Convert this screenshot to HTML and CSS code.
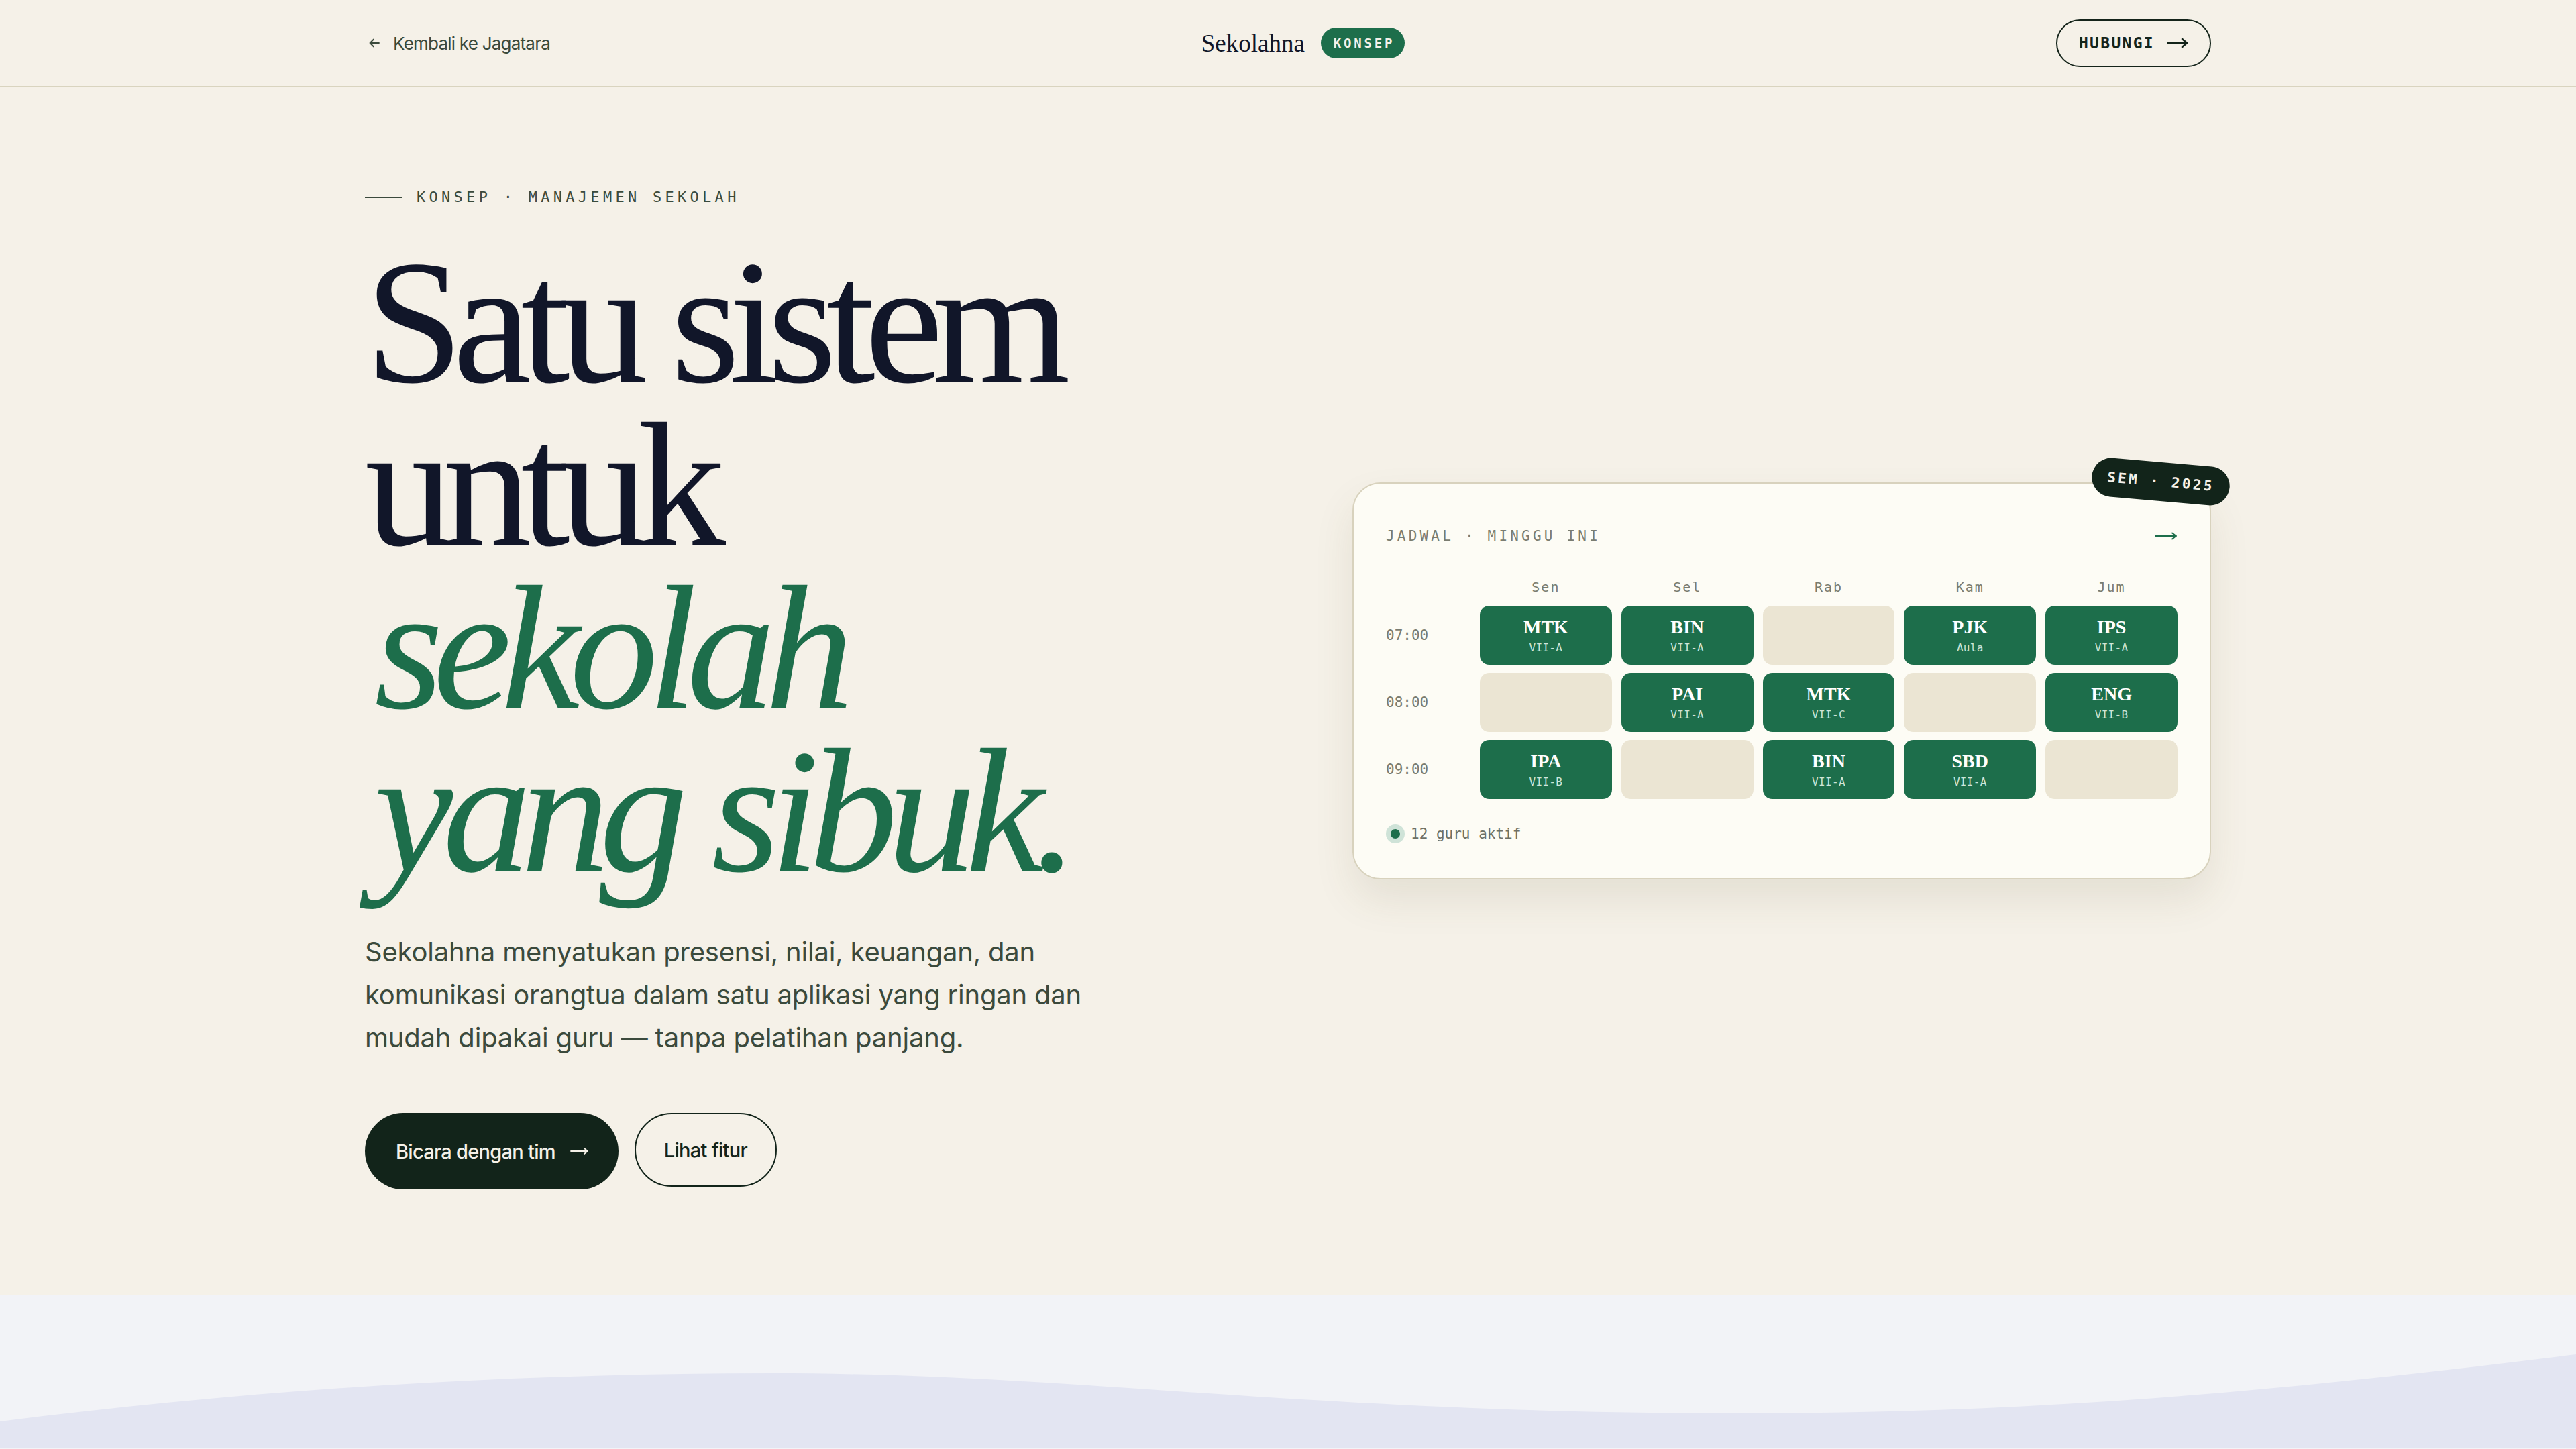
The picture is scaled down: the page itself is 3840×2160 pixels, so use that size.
FILE: index.html
```html
<!DOCTYPE html>
<html lang="id">
<head>
<meta charset="utf-8">
<title>Sekolahna — Konsep</title>
<link rel="stylesheet" href="styles.css">
</head>
<body>
<header class="topbar">
	<div class="wrap topbar-inner">
		<a class="back-link" href="#">
			<svg class="back-icon" viewBox="0 0 20 20" width="20" height="20"><path d="M17 10H3.5M9 4.5L3.5 10 9 15.5" fill="none" stroke="currentColor" stroke-width="1.8" stroke-linecap="round" stroke-linejoin="round"/></svg>
			Kembali ke Jagatara
		</a>
		<div class="brand">
			<span class="brand-name">Sekolahna</span>
			<span class="brand-tag">KONSEP</span>
		</div>
		<a class="contact-btn" href="#">HUBUNGI
			<svg class="arrow" viewBox="0 0 32 16" width="32" height="16"><path d="M1 8H30M23 2L30 8 23 14" fill="none" stroke="currentColor" stroke-width="2.6" stroke-linecap="round" stroke-linejoin="round"/></svg>
		</a>
	</div>
</header>

<section class="hero">
	<div class="wrap hero-inner">
		<div class="hero-copy">
			<div class="eyebrow"><span class="eyebrow-line"></span>KONSEP · MANAJEMEN SEKOLAH</div>
			<h1 class="headline">Satu sistem<br>untuk<br><em>sekolah</em><br><em>yang sibuk.</em></h1>
			<p class="lead">Sekolahna menyatukan presensi, nilai, keuangan, dan komunikasi orangtua dalam satu aplikasi yang ringan dan mudah dipakai guru — tanpa pelatihan panjang.</p>
			<div class="actions">
				<a class="btn btn-dark" href="#">Bicara dengan tim
					<svg class="arrow" viewBox="0 0 28 14" width="28" height="14"><path d="M1 7H26M21 3L26 7 21 11" fill="none" stroke="currentColor" stroke-width="1.8" stroke-linecap="round" stroke-linejoin="round"/></svg>
				</a>
				<a class="btn btn-line" href="#">Lihat fitur</a>
			</div>
		</div>

		<div class="schedule">
			<span class="sem-badge">SEM · 2025</span>
			<div class="schedule-head">
				<span class="schedule-title">JADWAL · MINGGU INI</span>
				<svg class="schedule-arrow" viewBox="0 0 34 14" width="34" height="14"><path d="M1 7H32M26 2.5L32 7 26 11.5" fill="none" stroke="currentColor" stroke-width="2" stroke-linecap="round" stroke-linejoin="round"/></svg>
			</div>
			<div class="grid">
				<span></span>
				<span class="day">Sen</span>
				<span class="day">Sel</span>
				<span class="day">Rab</span>
				<span class="day">Kam</span>
				<span class="day">Jum</span>

				<span class="time">07:00</span>
				<div class="slot"><b>MTK</b><small>VII-A</small></div>
				<div class="slot"><b>BIN</b><small>VII-A</small></div>
				<div class="slot empty"></div>
				<div class="slot"><b>PJK</b><small>Aula</small></div>
				<div class="slot"><b>IPS</b><small>VII-A</small></div>

				<span class="time">08:00</span>
				<div class="slot empty"></div>
				<div class="slot"><b>PAI</b><small>VII-A</small></div>
				<div class="slot"><b>MTK</b><small>VII-C</small></div>
				<div class="slot empty"></div>
				<div class="slot"><b>ENG</b><small>VII-B</small></div>

				<span class="time">09:00</span>
				<div class="slot"><b>IPA</b><small>VII-B</small></div>
				<div class="slot empty"></div>
				<div class="slot"><b>BIN</b><small>VII-A</small></div>
				<div class="slot"><b>SBD</b><small>VII-A</small></div>
				<div class="slot empty"></div>
			</div>
			<div class="schedule-foot"><span class="live-dot"></span>12 guru aktif</div>
		</div>
	</div>
</section>

<section class="next">
	<svg class="wave" viewBox="0 0 3840 228" preserveAspectRatio="none"><path d="M0,188 C380,140 760,116 1151,116 C1600,116 1950,176 2596,176 C3100,176 3500,130 3840,88 L3840,228 L0,228 Z" fill="#e3e5f2"/></svg>
</section>
</body>
</html>
```

FILE: styles.css
```css
* {
	box-sizing: border-box;
}
body {
	margin: 0;
	background-color: #f5f1e8;
	font-family: Inter, "Noto Sans", sans-serif;
	color: #111629;
}
a {
	text-decoration: none;
	color: inherit;
}
.wrap {
	max-width: 2752px;
	margin: 0 auto;
}
.arrow {
	display: block;
}

/* top bar */
.topbar {
	border-bottom: 2px solid #d9d4bf;
}
.topbar-inner {
	height: 128px;
	display: flex;
	align-items: center;
	justify-content: space-between;
}
.back-link {
	display: flex;
	align-items: center;
	gap: 18px;
	font-size: 26px;
	letter-spacing: -0.03em;
	color: #3b4a3c;
	padding-left: 4px;
}
.back-icon {
	display: block;
}
.brand {
	display: flex;
	align-items: center;
	gap: 24px;
}
.brand-name {
	font-family: "Liberation Serif", serif;
	font-size: 37px;
	color: #111629;
}
.brand-tag {
	background-color: #1d6e4b;
	color: #f5f1e8;
	font-family: "DejaVu Sans Mono", monospace;
	font-weight: bold;
	font-size: 19px;
	letter-spacing: 0.2em;
	height: 46px;
	padding: 0 15px 0 19px;
	border-radius: 23px;
	display: flex;
	align-items: center;
}
.contact-btn {
	display: flex;
	align-items: center;
	gap: 18px;
	height: 71px;
	padding: 0 32px 0 32px;
	border: 2px solid #14241a;
	border-radius: 36px;
	font-family: "DejaVu Sans Mono", monospace;
	font-weight: bold;
	font-size: 23px;
	letter-spacing: 0.1em;
	color: #14241a;
}

/* hero */
.hero {
	padding: 151px 0 158px;
}
.hero-inner {
	display: grid;
	grid-template-columns: 1fr 1280px;
	gap: 192px;
	align-items: center;
}
.eyebrow {
	display: flex;
	align-items: center;
	gap: 22px;
	font-family: "DejaVu Sans Mono", monospace;
	font-size: 22px;
	letter-spacing: 0.24em;
	color: #3b4a3c;
}
.eyebrow-line {
	width: 55px;
	height: 2px;
	background-color: #3b4a3c;
}
.headline {
	margin: 53px 0 0;
	font-family: "Liberation Serif", serif;
	font-weight: normal;
	font-size: 264px;
	line-height: 243px;
	letter-spacing: -0.06em;
	color: #111629;
}
.headline em {
	color: #1d6e4b;
	padding-left: 14px;
	letter-spacing: -0.058em;
}
.lead {
	margin: 56px 0 0;
	max-width: 1110px;
	font-size: 40px;
	line-height: 64px;
	letter-spacing: -0.005em;
	color: #3b4a3c;
}
.actions {
	display: flex;
	gap: 24px;
	margin-top: 80px;
}
.btn {
	display: flex;
	align-items: center;
	border-radius: 57px;
	font-size: 29px;
	font-weight: 500;
	letter-spacing: -0.025em;
}
.btn-dark {
	height: 114px;
	padding: 0 44px 0 46px;
	gap: 22px;
	background-color: #12241a;
	color: #f5f1e8;
}
.btn-line {
	height: 110px;
	padding: 0 42px;
	border: 2px solid #12241a;
	color: #12241a;
}

/* schedule card */
.schedule {
	position: relative;
	margin-bottom: 24px;
	background-color: #fdfcf5;
	border: 2px solid #d8d2bd;
	border-radius: 42px;
	padding: 60px 48px 52px;
	box-shadow: 0 30px 60px rgba(90, 80, 40, 0.1);
}
.sem-badge {
	position: absolute;
	top: -32px;
	right: -30px;
	width: 206px;
	height: 58px;
	border-radius: 29px;
	background-color: #12241a;
	color: #f5f1e8;
	font-family: "DejaVu Sans Mono", monospace;
	font-weight: bold;
	font-size: 21px;
	letter-spacing: 0.16em;
	display: flex;
	align-items: center;
	justify-content: center;
	transform: rotate(5deg);
}
.schedule-head {
	display: flex;
	justify-content: space-between;
	align-items: center;
	height: 36px;
}
.schedule-title {
	font-family: "DejaVu Sans Mono", monospace;
	font-size: 21px;
	letter-spacing: 0.2em;
	color: #7a7c70;
}
.schedule-arrow {
	display: block;
	color: #1d6e4b;
}
.grid {
	margin-top: 46px;
	display: grid;
	grid-template-columns: 126px repeat(5, 1fr);
	grid-template-rows: 28px repeat(3, 88px);
	gap: 12px 14px;
}
.day {
	text-align: center;
	font-family: "DejaVu Sans Mono", monospace;
	font-size: 20px;
	letter-spacing: 0.1em;
	color: #7a7c70;
}
.time {
	display: flex;
	align-items: center;
	font-family: "DejaVu Sans Mono", monospace;
	font-size: 21px;
	color: #7a7c70;
}
.slot {
	border-radius: 14px;
	background-color: #1d6e4b;
	display: flex;
	flex-direction: column;
	align-items: center;
	justify-content: center;
	gap: 6px;
}
.slot b {
	font-family: "Liberation Serif", serif;
	font-size: 28px;
	line-height: 30px;
	color: #ffffff;
}
.slot small {
	font-family: "DejaVu Sans Mono", monospace;
	font-size: 16px;
	letter-spacing: 0.02em;
	color: #cfe5d8;
}
.slot.empty {
	background-color: #ebe5d3;
}
.schedule-foot {
	margin-top: 38px;
	display: flex;
	align-items: center;
	gap: 9px;
	font-family: "DejaVu Sans Mono", monospace;
	font-size: 21px;
	color: #6e7064;
}
.live-dot {
	width: 28px;
	height: 28px;
	border-radius: 50%;
	background-color: #1d6e4b;
	border: 7px solid #cfe3d8;
}

/* next section */
.next {
	background-color: #f2f3f7;
	height: 320px;
	overflow: hidden;
}
.wave {
	display: block;
	width: 100%;
	height: 228px;
}
```
